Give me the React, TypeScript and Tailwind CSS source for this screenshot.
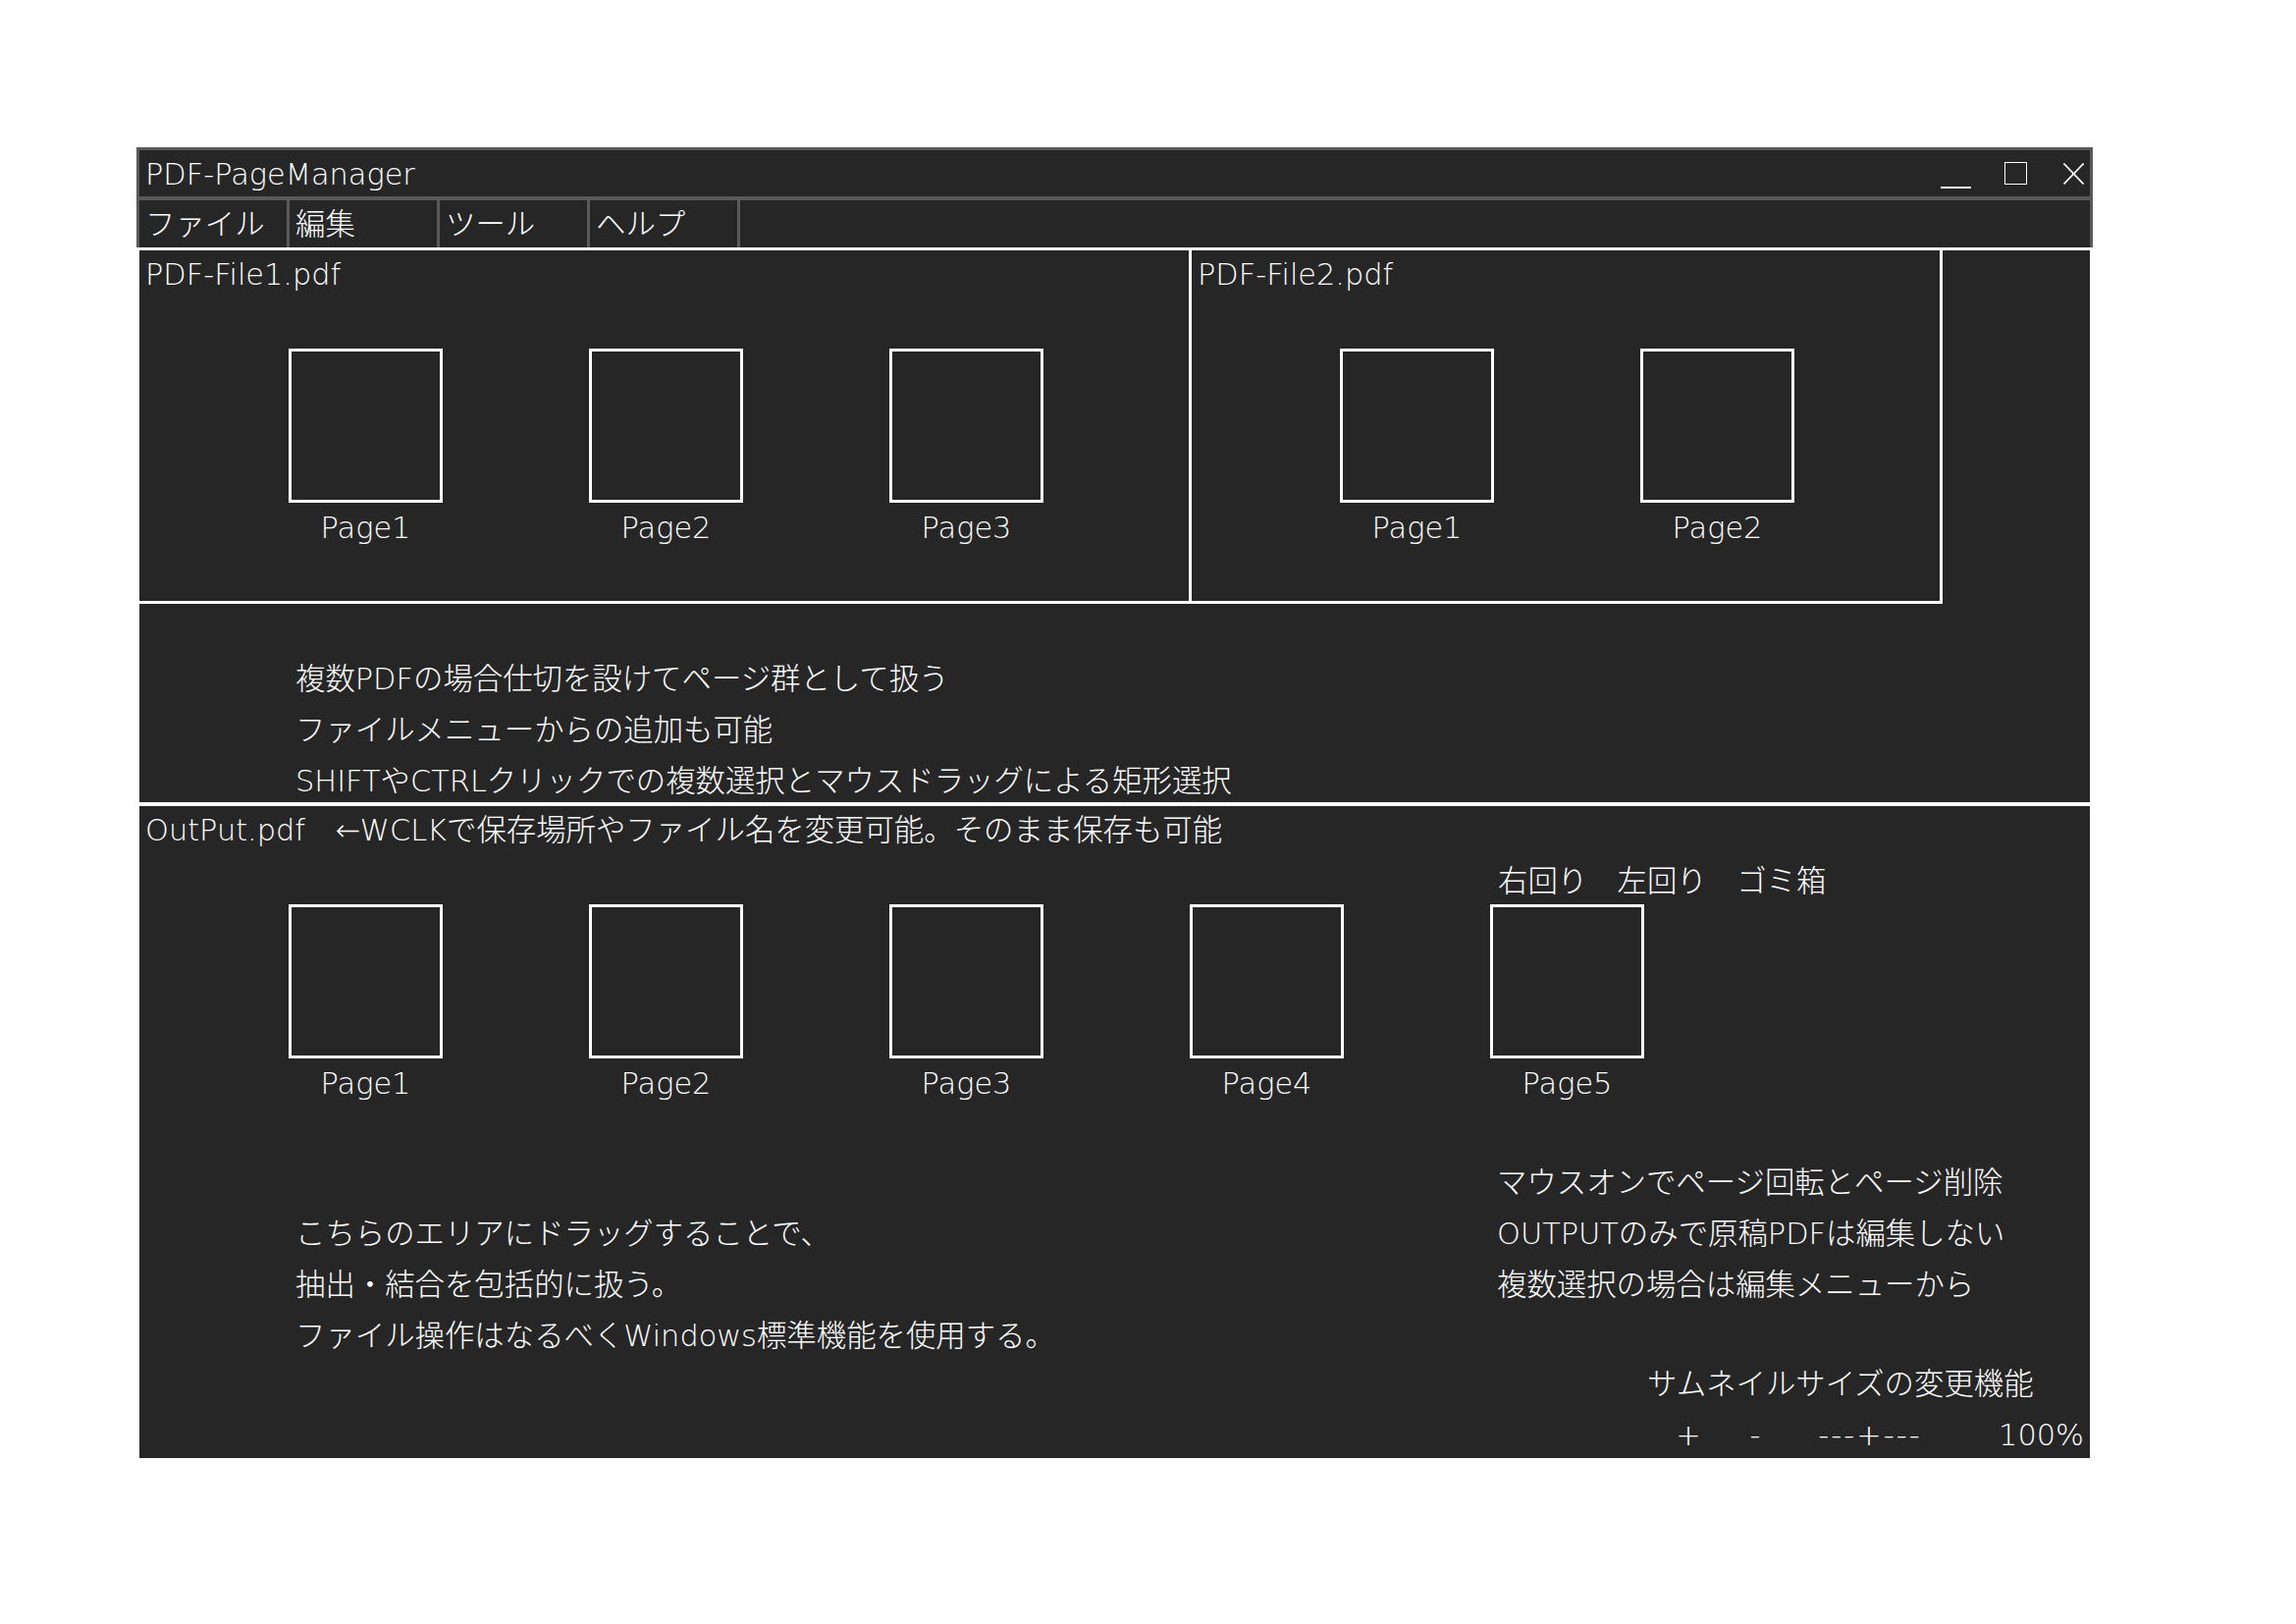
import React from "react";

function Thumb({ label, overlay }: { label: string; overlay?: boolean }) {
  return (
    <div className="relative flex w-[157px] flex-col items-center">
      {overlay && (
        <div className="absolute left-[8px] top-[-43px] whitespace-nowrap leading-[40px]">
          右回り　左回り　ゴミ箱
        </div>
      )}
      <div className="h-[157px] w-[157px] border-[3px] border-white" />
      <div className="mt-[6px] leading-[40px]">{label}</div>
    </div>
  );
}

export default function App() {
  const menus = ["ファイル", "編集", "ツール", "ヘルプ"];
  return (
    <div className="h-[1654px] w-full bg-white pl-[139px] pt-[150px] font-['DejaVu_Sans','Noto_Sans_CJK_JP',sans-serif] text-[30.4px] font-light text-white">
      <div className="w-[1993px]">
        {/* Title + menu with gray frame */}
        <div className="border-x-[3px] border-t-[3px] border-[#5a5a5a] bg-[#262626]">
          <div className="flex h-[47px] items-start">
            <div className="pl-[6px] pt-[2px] leading-[45px]">PDF-PageManager</div>
            <div className="ml-auto flex items-start pr-[6px]">
              <div className="mt-[37px] h-[2px] w-[31px] bg-white" />
              <div className="ml-[34px] mt-[12px] h-[23px] w-[23px] border border-white" />
              <svg className="ml-[37px] mt-[13px]" width="21" height="22" viewBox="0 0 21 22">
                <line x1="0.5" y1="0.5" x2="20.5" y2="21.5" stroke="white" strokeWidth="1.6" />
                <line x1="20.5" y1="0.5" x2="0.5" y2="21.5" stroke="white" strokeWidth="1.6" />
              </svg>
            </div>
          </div>
          <div className="h-[4px] bg-[#5a5a5a]" />
          <div className="flex h-[48px]">
            {menus.map((m) => (
              <div
                key={m}
                className="h-[48px] w-[153px] border-r-[3px] border-[#5a5a5a] pl-[6px] pt-[2px] leading-[46px]"
              >
                {m}
              </div>
            ))}
          </div>
        </div>

        {/* Content */}
        <div className="mx-[3px] bg-[#262626]">
          <div className="h-[3px] bg-white" />

          {/* Source PDF panels */}
          <div className="flex">
            <div className="h-[360px] w-[1072px] border-b-[3px] border-r-[3px] border-white pl-[6px] pt-[5px]">
              <div className="leading-[40px]">PDF-File1.pdf</div>
              <div className="mt-[55px] flex gap-[149px] pl-[146px]">
                <Thumb label="Page1" />
                <Thumb label="Page2" />
                <Thumb label="Page3" />
              </div>
            </div>
            <div className="h-[360px] w-[765px] border-b-[3px] border-r-[3px] border-white pl-[6px] pt-[5px]">
              <div className="leading-[40px]">PDF-File2.pdf</div>
              <div className="mt-[55px] flex gap-[149px] pl-[145px]">
                <Thumb label="Page1" />
                <Thumb label="Page2" />
              </div>
            </div>
          </div>

          {/* Description */}
          <div className="h-[202px] pl-[159px] pt-[51px] leading-[52px]">
            <div>複数PDFの場合仕切を設けてページ群として扱う</div>
            <div>ファイルメニューからの追加も可能</div>
            <div>SHIFTやCTRLクリックでの複数選択とマウスドラッグによる矩形選択</div>
          </div>

          <div className="h-[4px] bg-white" />

          {/* Output */}
          <div className="h-[664px] overflow-hidden">
            <div className="pl-[6px] pt-[5px] leading-[40px] whitespace-nowrap">
              OutPut.pdf　←WCLKで保存場所やファイル名を変更可能。そのまま保存も可能
            </div>
            <div className="mt-[55px] flex gap-[149px] pl-[152px]">
              <Thumb label="Page1" />
              <Thumb label="Page2" />
              <Thumb label="Page3" />
              <Thumb label="Page4" />
              <Thumb label="Page5" overlay />
            </div>
            <div className="flex h-[361px]">
              <div className="w-[1383px] pl-[159px] pt-[107px] leading-[52px]">
                <div>こちらのエリアにドラッグすることで、</div>
                <div>抽出・結合を包括的に扱う。</div>
                <div>ファイル操作はなるべくWindows標準機能を使用する。</div>
              </div>
              <div className="flex-1 pt-[55px] leading-[52px]">
                <div>マウスオンでページ回転とページ削除</div>
                <div>OUTPUTのみで原稿PDFは編集しない</div>
                <div>複数選択の場合は編集メニューから</div>
                <div className="mt-[49px] pl-[153px] whitespace-nowrap">サムネイルサイズの変更機能</div>
                <div className="flex h-[52px] items-center">
                  <span className="ml-[175px] w-[40px] text-center">+</span>
                  <span className="ml-[28px] w-[40px] text-center">-</span>
                  <span className="ml-[43px] w-[108px] text-center tracking-[2px]">---+---</span>
                  <span className="ml-auto pr-[6px]">100%</span>
                </div>
              </div>
            </div>
          </div>
        </div>
      </div>
    </div>
  );
}
